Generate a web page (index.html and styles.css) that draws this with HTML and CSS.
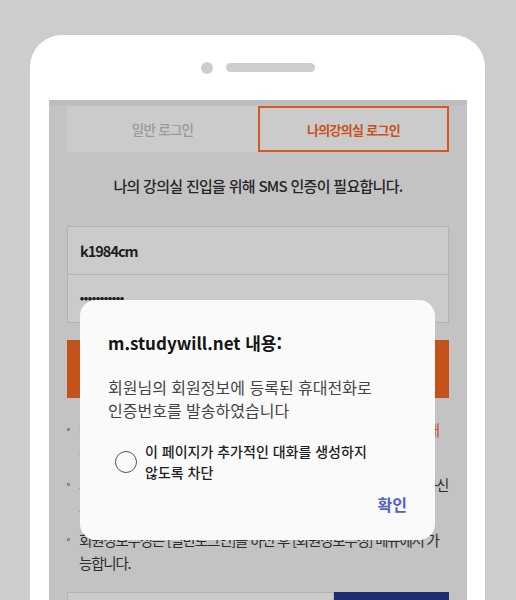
FILE: index.html
```html
<!DOCTYPE html>
<html lang="ko">
<head>
    <meta charset="utf-8">
    <title>나의강의실 로그인</title>
    <link rel="stylesheet" href="styles.css">
</head>
<body>
    <div class="phone">
        <div class="speaker">
            <span class="camera"></span>
            <span class="grill"></span>
        </div>
        <div class="screen">
            <div class="tabs">
                <div class="tab">일반 로그인</div>
                <div class="tab active">나의강의실 로그인</div>
            </div>
            <p class="notice">나의 강의실 진입을 위해 SMS 인증이 필요합니다.</p>
            <div class="login-box">
                <div class="field id">k1984cm</div>
                <div class="field pw">●●●●●●●●●●●</div>
            </div>
            <div class="btn-send">인증번호 받기</div>
            <ul class="guide">
                <li>나의강의실 로그인 시 회원정보에 등록된 휴대전화로 <em>인증번호 안내 문자가 발송됩니다.</em></li>
                <li>휴대전화 번호가 변경되었다면 회원정보수정에서 번호를 꼭 수정하신 후 이용하세요.</li>
                <li>회원정보수정은 [일반로그인]을 하신 후 [회원정보수정] 메뉴에서 가능합니다.</li>
            </ul>
            <div class="code-row">
                <div class="code-input"></div>
                <div class="code-btn"></div>
            </div>
        </div>
    </div>

    <div class="dialog">
        <h2>m.studywill.net 내용:</h2>
        <p class="message">회원님의 회원정보에 등록된 휴대전화로<br>인증번호를 발송하였습니다</p>
        <label class="block">
            <span class="radio"></span>
            <span>이 페이지가 추가적인 대화를 생성하지<br>않도록 차단</span>
        </label>
        <div class="actions">
            <button type="button">확인</button>
        </div>
    </div>
</body>
</html>
```

FILE: styles.css
```css
body {
    margin: 0;
    background-color: #cdcdcd;
    font-family: "Noto Sans CJK KR", "Noto Sans", sans-serif;
    overflow: hidden;
    height: 600px;
}
.phone {
    margin: 35px 31px 0 30px;
    padding: 0 18px 0 19px;
    background-color: #fff;
    border-radius: 32px 32px 0 0;
    height: 565px;
}
.speaker {
    height: 65px;
    display: flex;
    align-items: center;
    justify-content: center;
    gap: 13px;
}
.camera {
    width: 12px;
    height: 12px;
    border-radius: 50%;
    background-color: #cdcdcd;
}
.grill {
    width: 89px;
    height: 9px;
    border-radius: 5px;
    background-color: #cdcdcd;
}
.screen {
    background-color: #c3c3c3;
    border-top: 5px solid #bcbcbc;
    padding: 1px 18px 0;
    height: 500px;
}
.tabs {
    display: grid;
    grid-template-columns: 1fr 1fr;
    height: 46px;
}
.tab {
    display: flex;
    align-items: center;
    justify-content: center;
    background-color: #cbcbcb;
    color: #999;
    font-size: 13.5px;
    font-weight: 500;
    letter-spacing: -0.7px;
}
.tab.active {
    border: 2px solid #d05a22;
    color: #c9501a;
    font-weight: bold;
    font-size: 13px;
}
.notice {
    margin: 0;
    padding: 23px 0 0;
    height: 51px;
    text-align: center;
    font-size: 15px;
    font-weight: 500;
    letter-spacing: -0.7px;
    color: #262626;
}
.login-box {
    border: 1px solid #b2b2b2;
    background-color: #cbcbcb;
}
.field {
    height: 47px;
    display: flex;
    align-items: center;
    padding-left: 12px;
    font-size: 14.5px;
    font-weight: bold;
    letter-spacing: -1px;
    color: #1e1e1e;
}
.field.id {
    border-bottom: 1px solid #b2b2b2;
}
.field.pw {
    font-size: 4px;
    letter-spacing: 0;
}
.btn-send {
    margin-top: 17px;
    height: 58px;
    background-color: #c4531b;
    color: #c4531b;
}
.guide {
    list-style: none;
    margin: 20px 0 0;
    padding: 0;
    font-size: 14.5px;
    line-height: 23px;
    letter-spacing: -1.2px;
    color: #2c2c2c;
    word-break: break-all;
}
.guide li {
    position: relative;
    padding-left: 12px;
    margin-bottom: 9px;
}
.guide li::before {
    content: "";
    position: absolute;
    left: 0;
    top: 10px;
    width: 3px;
    height: 3px;
    background-color: #8a8a8a;
}
.guide em {
    font-style: normal;
    color: #c9501a;
}
.code-row {
    display: flex;
    margin-top: 18px;
    height: 46px;
}
.code-input {
    flex: 1;
    border: 1px solid #b2b2b2;
    background-color: #cbcbcb;
}
.code-btn {
    width: 115px;
    background-color: #1f2e70;
}
.dialog {
    position: absolute;
    left: 80px;
    top: 300px;
    width: 355px;
    height: 240px;
    box-sizing: border-box;
    padding: 28px 28px 0;
    background-color: #fafafa;
    border-radius: 16px;
}
.dialog h2 {
    margin: 0;
    font-size: 17px;
    font-weight: bold;
    color: #151515;
    line-height: 30px;
}
.message {
    margin: 18px 0 0;
    font-size: 16px;
    line-height: 23px;
    color: #444;
}
.block {
    display: flex;
    align-items: center;
    gap: 8px;
    margin: 19px 0 0 7px;
    font-size: 14px;
    font-weight: 500;
    line-height: 21px;
    color: #1e1e1e;
}
.radio {
    width: 20px;
    height: 20px;
    border: 1.5px solid #555;
    border-radius: 50%;
    flex-shrink: 0;
}
.actions {
    display: flex;
    justify-content: flex-end;
    margin-top: 9px;
}
.actions button {
    border: none;
    background: none;
    padding: 0;
    font-family: inherit;
    font-size: 16px;
    font-weight: bold;
    color: #4f5fcf;
}
```
